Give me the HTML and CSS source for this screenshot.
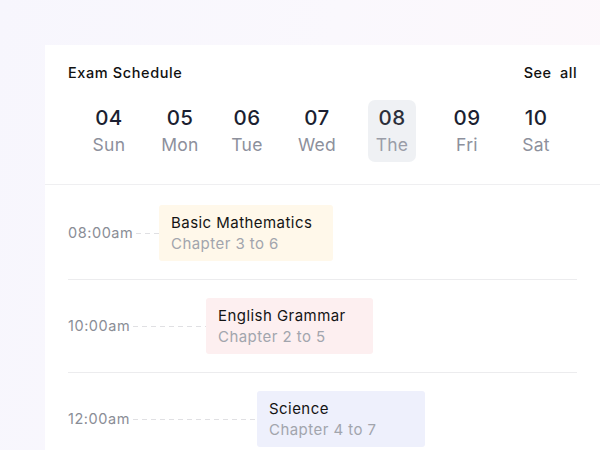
FILE: index.html
```html
<!DOCTYPE html>
<html lang="en">
<head>
<meta charset="utf-8">
<title>Exam Schedule</title>
<link rel="stylesheet" href="styles.css">
</head>
<body>
<div class="page">
  <section class="card">
    <header class="card-head">
      <div class="head-row">
        <h2 class="title">Exam Schedule</h2>
        <a class="see-all" href="#">See&nbsp; all</a>
      </div>
      <div class="dates">
        <div class="date"><span class="num">04</span><span class="day">Sun</span></div>
        <div class="date"><span class="num">05</span><span class="day">Mon</span></div>
        <div class="date"><span class="num">06</span><span class="day">Tue</span></div>
        <div class="date"><span class="num">07</span><span class="day">Wed</span></div>
        <div class="date is-active"><span class="num">08</span><span class="day">The</span></div>
        <div class="date"><span class="num">09</span><span class="day">Fri</span></div>
        <div class="date"><span class="num">10</span><span class="day">Sat</span></div>
      </div>
    </header>
    <div class="schedule">
      <div class="slot">
        <div class="lead lead-1"><span class="time">08:00am</span><span class="dash"></span></div>
        <div class="event event-yellow">
          <div class="ev-title">Basic Mathematics</div>
          <div class="ev-sub">Chapter 3 to 6</div>
        </div>
      </div>
      <div class="slot">
        <div class="lead lead-2"><span class="time">10:00am</span><span class="dash"></span></div>
        <div class="event event-pink">
          <div class="ev-title">English Grammar</div>
          <div class="ev-sub">Chapter 2 to 5</div>
        </div>
      </div>
      <div class="slot">
        <div class="lead lead-3"><span class="time">12:00am</span><span class="dash"></span></div>
        <div class="event event-blue">
          <div class="ev-title">Science</div>
          <div class="ev-sub">Chapter 4 to 7</div>
        </div>
      </div>
    </div>
  </section>
</div>
</body>
</html>
```
FILE: styles.css
```css
* { box-sizing: border-box; }
html, body { margin: 0; height: 100%; }
body {
  font-family: "Inter", "Noto Sans", sans-serif;
  background: linear-gradient(100deg, #f7f6fd 0%, #faf8fd 50%, #fdf8fb 100%);
  overflow: hidden;
}
.page {
  padding: 45px 0 0 45px;
}
.card {
  width: 555px;
  background: #ffffff;
  min-height: 420px;
}
.card-head {
  padding: 18px 23px 22px;
  border-bottom: 1px solid #efeff1;
  height: 140px;
}
.head-row {
  display: flex;
  justify-content: space-between;
  align-items: center;
  height: 20px;
}
.title {
  margin: 0;
  font-size: 14.5px;
  letter-spacing: 0.6px;
  font-weight: 500;
  color: #111111;
  line-height: 20px;
}
.see-all {
  font-size: 14.5px;
  letter-spacing: 0.45px;
  font-weight: 500;
  color: #111111;
  text-decoration: none;
  line-height: 20px;
}
.dates {
  display: grid;
  grid-template-columns: 70px 72px 62px 78px 72px 78px 60px;
  margin: 17px 0 0 6px;
}
.date {
  justify-self: center;
  display: flex;
  flex-direction: column;
  align-items: center;
  padding: 5px 8px;
  border-radius: 7px;
}
.date.is-active { background: #eff1f4; }
.num {
  font-size: 20.5px;
  letter-spacing: 0.4px;
  line-height: 26px;
  font-weight: 500;
  color: #1b1f31;
}
.is-active .num { color: #2c2f3a; }
.day {
  margin-top: 2px;
  font-size: 17.5px;
  letter-spacing: 0.3px;
  line-height: 24px;
  color: #8d909c;
}
.is-active .day { color: #9a9da8; }
.schedule {
  padding: 0 23px;
}
.slot {
  display: flex;
  align-items: center;
  padding: 18px 0 18px;
  border-bottom: 1px solid #ececee;
}
.slot:first-child { padding-top: 20px; }
.lead {
  display: flex;
  align-items: center;
  flex: none;
}
.lead-1 { width: 91px; }
.lead-2 { width: 138px; }
.lead-3 { width: 189px; }
.time {
  font-size: 14.5px;
  letter-spacing: 0.55px;
  color: #8a8d96;
  line-height: 20px;
}
.dash {
  flex: 1;
  height: 1px;
  margin-left: 3px;
  background: repeating-linear-gradient(90deg, #e0e0e3 0 5px, transparent 5px 9px);
}
.event {
  width: 174px;
  padding: 8px 12px 6px;
  border-radius: 3px;
}
.event-yellow { background: #fff8ea; }
.event-pink { background: #fdeff0; width: 167px; }
.event-blue { background: #eef0fc; width: 168px; }
.ev-title {
  font-size: 15px;
  letter-spacing: 0.45px;
  line-height: 20px;
  color: #141414;
}
.ev-sub {
  font-size: 15px;
  letter-spacing: 0.45px;
  line-height: 22px;
  color: #a2a5ad;
}
```
